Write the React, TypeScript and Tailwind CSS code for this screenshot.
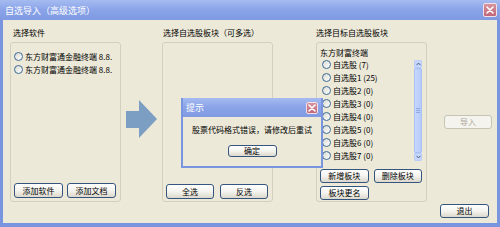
import React from 'react'

const font = "font-['Noto_Sans_CJK_SC','Noto_Sans',sans-serif]"

function XpButton({ label, className = '', disabled = false }: { label: string; className?: string; disabled?: boolean }) {
  return (
    <div
      className={`flex items-center justify-center rounded-[3px] border text-[8px] leading-none ${
        disabled
          ? 'border-[#c6c4b6] bg-[#f4f3ee] text-[#aca899]'
          : 'border-[#35557f] bg-gradient-to-b from-white via-[#f4f3ee] to-[#dcd8cc] text-black'
      } ${className}`}
    >
      {label}
    </div>
  )
}

function Radio() {
  return <div className="h-[9px] w-[9px] shrink-0 rounded-full border border-[#3d6a98] bg-gradient-to-br from-[#d8d8d2] to-white" />
}

function CloseBtn({ className = '' }: { className?: string }) {
  return (
    <div className={`flex items-center justify-center rounded-[2px] border border-[#f0e2e6] bg-gradient-to-b from-[#d7919d] to-[#c0677a] ${className}`}>
      <svg width="8" height="8" viewBox="0 0 8 8">
        <path d="M1 1 L7 7 M7 1 L1 7" stroke="white" strokeWidth="1.6" strokeLinecap="round" />
      </svg>
    </div>
  )
}

function Scrollbar() {
  return (
    <div className="mt-[2px] flex h-[101px] w-[8px] flex-col bg-[#f7f6f2]">
      <div className="flex h-[8px] items-center justify-center rounded-[1px] border border-[#bccdf5] bg-[#c6d6fc]">
        <svg width="5" height="4" viewBox="0 0 5 4">
          <path d="M0.5 3.2 L2.5 1 L4.5 3.2" stroke="#4d6185" strokeWidth="1" fill="none" />
        </svg>
      </div>
      <div className="flex flex-1 items-center justify-center rounded-[1px] border border-[#a9c0f2] bg-gradient-to-r from-[#c7d7fd] to-[#b6cbf9]">
        <div className="flex flex-col gap-[1px]">
          <div className="h-px w-[4px] bg-[#8fa9e4]" />
          <div className="h-px w-[4px] bg-[#8fa9e4]" />
          <div className="h-px w-[4px] bg-[#8fa9e4]" />
        </div>
      </div>
      <div className="flex h-[8px] items-center justify-center rounded-[1px] border border-[#bccdf5] bg-[#c6d6fc]">
        <svg width="5" height="4" viewBox="0 0 5 4">
          <path d="M0.5 0.8 L2.5 3 L4.5 0.8" stroke="#4d6185" strokeWidth="1" fill="none" />
        </svg>
      </div>
    </div>
  )
}

const boards = ['自选股 (7)', '自选股1 (25)', '自选股2 (0)', '自选股3 (0)', '自选股4 (0)', '自选股5 (0)', '自选股6 (0)', '自选股7 (0)']

export default function App() {
  return (
    <div className={`relative flex h-[227px] w-[500px] flex-col bg-[#7a95e0] ${font}`}>
      {/* title bar */}
      <div className="flex h-[20px] shrink-0 items-center justify-between bg-gradient-to-b from-[#a5bbf0] via-[#8aa3e8] to-[#7f9ae2] pl-[5px] pr-[3px]">
        <span className="text-[9px] leading-none text-white">自选导入（高级选项）</span>
        <CloseBtn className="h-[14px] w-[14px]" />
      </div>

      {/* body */}
      <div className="mx-[3px] mb-[4px] flex flex-1 flex-col bg-[#ece9d8] pt-[8px] text-black">
        <div className="flex h-[174px] pl-[7px]">
          {/* software */}
          <div className="flex w-[111px] flex-col">
            <div className="h-[14px] pl-[3px] text-[8px] leading-[10px]">选择软件</div>
            <div className="flex h-[160px] flex-col justify-between rounded-[3px] border border-[#d3d0bf] px-[3px] pb-[3px] pt-[7px]">
              <div className="flex flex-col overflow-hidden">
                {[0, 1].map((i) => (
                  <div key={i} className="flex h-[13px] items-center gap-[2px] whitespace-nowrap text-[8px]">
                    <Radio />
                    <span>东方财富通金融终端 8.8.</span>
                  </div>
                ))}
              </div>
              <div className="flex gap-[4px]">
                <XpButton label="添加软件" className="h-[15px] w-[49px]" />
                <XpButton label="添加文档" className="h-[15px] w-[49px]" />
              </div>
            </div>
          </div>

          {/* arrow */}
          <div className="mx-[5px] mt-[72px] w-[31px]">
            <svg width="31" height="38" viewBox="0 0 31 38">
              <path d="M0 11 H13 V0 L31 19 L13 38 V28 H0 Z" fill="#7c9ec2" />
            </svg>
          </div>

          {/* boards */}
          <div className="flex w-[111px] flex-col">
            <div className="h-[14px] pl-[1px] text-[8px] leading-[10px]">选择自选股板块（可多选）</div>
            <div className="flex h-[160px] flex-col justify-end rounded-[3px] border border-[#d3d0bf] px-[3px] pb-[2px]">
              <div className="flex gap-[6px]">
                <XpButton label="全选" className="h-[15px] w-[48px]" />
                <XpButton label="反选" className="h-[15px] w-[48px]" />
              </div>
            </div>
          </div>

          {/* target */}
          <div className="ml-[43px] flex w-[111px] flex-col">
            <div className="h-[14px] text-[8px] leading-[10px]">选择目标自选股板块</div>
            <div className="flex h-[160px] flex-col rounded-[3px] border border-[#d3d0bf] pb-[1px] pl-[3px] pr-[4px] pt-[4px]">
              <div className="h-[11px] text-[8px] leading-[11px]">东方财富终端</div>
              <div className="flex h-[103px]">
                <div className="flex flex-1 flex-col overflow-hidden pl-[2px]">
                  {boards.map((b) => (
                    <div key={b} className="flex h-[13px] shrink-0 items-center gap-[2px] whitespace-nowrap text-[8px]">
                      <Radio />
                      <span>{b}</span>
                    </div>
                  ))}
                </div>
                <Scrollbar />
              </div>
              <div className="mt-auto flex flex-col gap-[3px]">
                <div className="flex gap-[5px]">
                  <XpButton label="新增板块" className="h-[14px] w-[49px]" />
                  <XpButton label="删除板块" className="h-[14px] w-[49px]" />
                </div>
                <XpButton label="板块更名" className="h-[14px] w-[49px]" />
              </div>
            </div>
          </div>

          {/* import */}
          <div className="ml-[17px] pt-[87px]">
            <XpButton label="导入" disabled className="h-[14px] w-[48px]" />
          </div>
        </div>

        <div className="mt-[2px] flex justify-end pr-[8px]">
          <XpButton label="退出" className="h-[14px] w-[49px]" />
        </div>
      </div>

      {/* message dialog */}
      <div className="absolute left-[181px] top-[98px] flex h-[70px] w-[142px] flex-col bg-[#7a95e0] px-[2px] pb-[2px]">
        <div className="flex h-[19px] shrink-0 items-center justify-between bg-gradient-to-b from-[#a5bbf0] via-[#8aa3e8] to-[#7f9ae2] pl-[3px] pr-[3px]">
          <span className="text-[9px] leading-none text-white">提示</span>
          <CloseBtn className="h-[12px] w-[12px]" />
        </div>
        <div className="flex flex-1 flex-col items-center bg-[#ece9d8] pt-[8px]">
          <div className="text-[8px] leading-[10px]">股票代码格式错误，请修改后重试</div>
          <XpButton label="确定" className="mt-[10px] h-[12px] w-[49px]" />
        </div>
      </div>
    </div>
  )
}
